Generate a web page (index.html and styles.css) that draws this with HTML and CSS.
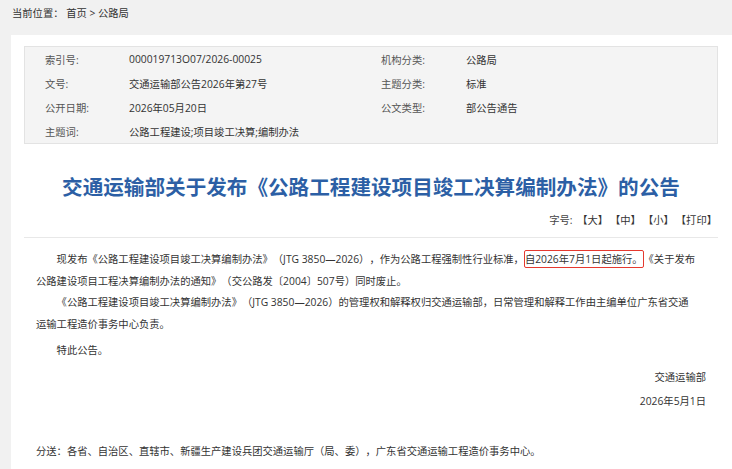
FILE: index.html
```html
<!DOCTYPE html>
<html lang="zh-CN">
<head>
  <meta charset="UTF-8" />
  <title>交通运输部关于发布《公路工程建设项目竣工决算编制办法》的公告</title>
  <link rel="stylesheet" href="styles.css">
</head>
<body>
  <div class="crumb">当前位置：&nbsp;<a href="#">首页</a> &gt; <a href="#">公路局</a></div>

  <div class="panel">
    <div class="info">
      <span class="label">索引号:</span><span class="value">000019713O07/2026-00025</span>
      <span class="label">机构分类:</span><span class="value">公路局</span>

      <span class="label">文号:</span><span class="value">交通运输部公告2026年第27号</span>
      <span class="label">主题分类:</span><span class="value">标准</span>

      <span class="label">公开日期:</span><span class="value">2026年05月20日</span>
      <span class="label">公文类型:</span><span class="value">部公告通告</span>

      <span class="label">主题词:</span><span class="value">公路工程建设;项目竣工决算;编制办法</span>
      <span class="label"></span><span class="value"></span>
    </div>

    <h1 class="title">交通运输部关于发布《公路工程建设项目竣工决算编制办法》的公告</h1>

    <div class="tools">字号: <a href="#">【大】</a><a href="#">【中】</a><a href="#">【小】</a><a href="#">【打印】</a></div>

    <div class="article">
      <p class="indent">现发布《公路工程建设项目竣工决算编制办法》（JTG 3850—2026），作为公路工程强制性行业标准，<span class="mark">自2026年7月1日起施行。</span>《关于发布公路建设项目工程决算编制办法的通知》（交公路发〔2004〕507号）同时废止。</p>
      <p class="indent">《公路工程建设项目竣工决算编制办法》（JTG 3850—2026）的管理权和解释权归交通运输部，日常管理和解释工作由主编单位广东省交通运输工程造价事务中心负责。</p>
      <p class="indent gap">特此公告。</p>
      <p class="sign">交通运输部</p>
      <p class="sign date">2026年5月1日</p>
      <p class="send">分送：各省、自治区、直辖市、新疆生产建设兵团交通运输厅（局、委），广东省交通运输工程造价事务中心。</p>
    </div>
  </div>
</body>
</html>
```

FILE: styles.css
```css
html, body {
  margin: 0;
  padding: 0;
  overflow: hidden;
  height: 100%;
}
body {
  background: #f1f1f1;
  color: #333;
  font-family: 'Open Sans', 'Noto Sans CJK SC', sans-serif;
  font-size: 10.3px;
  text-spacing-trim: space-all;
}
a {
  color: #333;
  text-decoration: none;
}
.crumb {
  height: 35px;
  line-height: 26px;
  padding-left: 12px;
}
.panel {
  background: #fff;
  margin-left: 11px;
  padding: 11px 14px 40px 13px;
  min-height: 100%;
}
.info {
  display: grid;
  grid-template-columns: 84px 252px 85px 1fr;
  grid-auto-rows: 24px;
  align-items: center;
  background: #f4f4f4;
  border: 1px solid #e3e3e3;
  padding: 0 0 0 20px;
}
.info .label {
  color: #555;
}
.title {
  margin: 28px 0 0;
  text-align: center;
  font-size: 20.6px;
  line-height: 30px;
  font-weight: 700;
  color: #2c5fa5;
}
.tools {
  margin-top: 7px;
  text-align: right;
  line-height: 22px;
  padding: 0 1px 6px 0;
  border-bottom: 1px solid #e8e8e8;
  color: #444;
}
.tools a {
  margin-left: 2px;
}
.article {
  padding: 11px 12px 0;
}
.article p {
  margin: 0;
  line-height: 21.7px;
}
.indent {
  text-indent: 2em;
  margin-right: 9px !important;
}
.gap {
  margin-top: 4px !important;
}
.mark {
  border: 1px solid #e5392f;
  border-radius: 2px;
  padding: 1px 0;
}
.sign {
  text-align: right;
  margin-top: 5px !important;
}
.date {
  margin-top: 3px !important;
}
.send {
  margin-top: 28px !important;
}
```
